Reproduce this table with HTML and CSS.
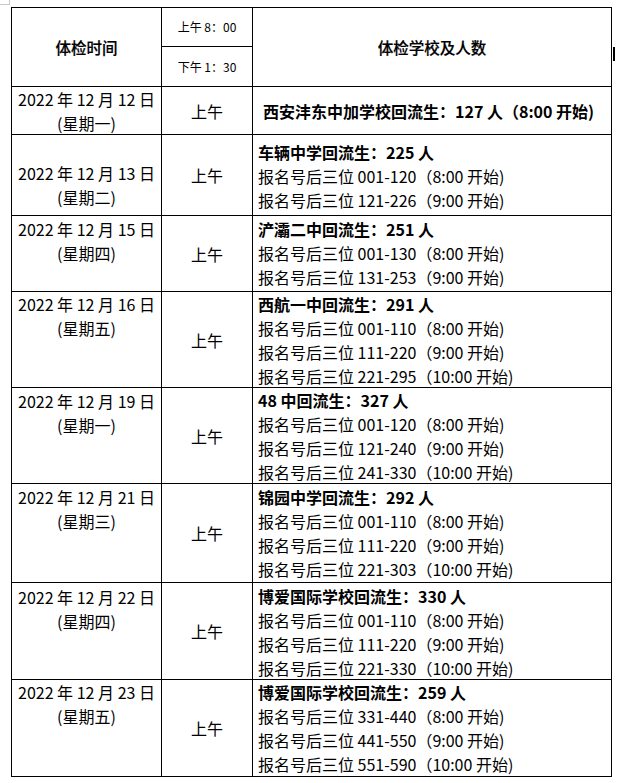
FILE: index.html
```html
<!DOCTYPE html>
<html lang="zh-CN">
<head>
<meta charset="utf-8">
<title>体检安排</title>
<link rel="stylesheet" href="styles.css">
</head>
<body>
<div class="corner"></div>
<div class="sheet">
  <div class="row head">
    <div class="c1 hcell">体检时间</div>
    <div class="c2 split">
      <div class="sub top">上午 8：00</div>
      <div class="sub bot">下午 1：30</div>
    </div>
    <div class="c3 hcell">体检学校及人数</div>
  </div>

  <div class="row r1">
    <div class="c1 date"><div>2022 年 12 月 12 日</div><div>(星期一)</div></div>
    <div class="c2 am">上午</div>
    <div class="c3 school single"><div class="b">西安沣东中加学校回流生：127 人（8:00 开始)</div></div>
  </div>

  <div class="row r2">
    <div class="c1 date"><div>2022 年 12 月 13 日</div><div>(星期二)</div></div>
    <div class="c2 am">上午</div>
    <div class="c3 school">
      <div class="b">车辆中学回流生：225 人</div>
      <div>报名号后三位 001-120（8:00 开始)</div>
      <div>报名号后三位 121-226（9:00 开始)</div>
    </div>
  </div>

  <div class="row r3">
    <div class="c1 date"><div>2022 年 12 月 15 日</div><div>(星期四)</div></div>
    <div class="c2 am">上午</div>
    <div class="c3 school">
      <div class="b">浐灞二中回流生：251 人</div>
      <div>报名号后三位 001-130（8:00 开始)</div>
      <div>报名号后三位 131-253（9:00 开始)</div>
    </div>
  </div>

  <div class="row r4">
    <div class="c1 date"><div>2022 年 12 月 16 日</div><div>(星期五)</div></div>
    <div class="c2 am">上午</div>
    <div class="c3 school">
      <div class="b">西航一中回流生：291 人</div>
      <div>报名号后三位 001-110（8:00 开始)</div>
      <div>报名号后三位 111-220（9:00 开始)</div>
      <div>报名号后三位 221-295（10:00 开始)</div>
    </div>
  </div>

  <div class="row r5">
    <div class="c1 date"><div>2022 年 12 月 19 日</div><div>(星期一)</div></div>
    <div class="c2 am">上午</div>
    <div class="c3 school">
      <div class="b">48 中回流生：327 人</div>
      <div>报名号后三位 001-120（8:00 开始)</div>
      <div>报名号后三位 121-240（9:00 开始)</div>
      <div>报名号后三位 241-330（10:00 开始)</div>
    </div>
  </div>

  <div class="row r6">
    <div class="c1 date"><div>2022 年 12 月 21 日</div><div>(星期三)</div></div>
    <div class="c2 am">上午</div>
    <div class="c3 school">
      <div class="b">锦园中学回流生：292 人</div>
      <div>报名号后三位 001-110（8:00 开始)</div>
      <div>报名号后三位 111-220（9:00 开始)</div>
      <div>报名号后三位 221-303（10:00 开始)</div>
    </div>
  </div>

  <div class="row r7">
    <div class="c1 date"><div>2022 年 12 月 22 日</div><div>(星期四)</div></div>
    <div class="c2 am">上午</div>
    <div class="c3 school">
      <div class="b">博爱国际学校回流生：330 人</div>
      <div>报名号后三位 001-110（8:00 开始)</div>
      <div>报名号后三位 111-220（9:00 开始)</div>
      <div>报名号后三位 221-330（10:00 开始)</div>
    </div>
  </div>

  <div class="row r8">
    <div class="c1 date"><div>2022 年 12 月 23 日</div><div>(星期五)</div></div>
    <div class="c2 am">上午</div>
    <div class="c3 school">
      <div class="b">博爱国际学校回流生：259 人</div>
      <div>报名号后三位 331-440（8:00 开始)</div>
      <div>报名号后三位 441-550（9:00 开始)</div>
      <div>报名号后三位 551-590（10:00 开始)</div>
    </div>
  </div>
  <div class="mark"></div>
</div>
</body>
</html>
```

FILE: styles.css
```css
html, body {
  margin: 0;
  padding: 0;
  background: #fff;
}
body {
  font-family: "Noto Sans CJK SC", "Noto Sans", sans-serif;
  color: #000;
  font-size: 16px;
  line-height: 24px;
}
.corner {
  position: absolute;
  left: 0;
  top: 0;
  width: 9px;
  height: 4px;
  border-right: 1px solid #c8c8c8;
  border-bottom: 1px solid #c8c8c8;
}
.sheet {
  position: relative;
  width: 601px;
  margin: 7px 0 0 11px;
  border-top: 1px solid #000;
  border-left: 1px solid #000;
  box-sizing: border-box;
}
.row {
  display: flex;
}
.row > div {
  box-sizing: border-box;
  border-right: 1px solid #000;
  border-bottom: 1px solid #000;
}
.c1 { width: 150px; }
.c2 { width: 91px; }
.c3 { width: 359px; }

.head { height: 79px; }
.hcell {
  display: flex;
  align-items: center;
  justify-content: center;
  font-size: 15.5px;
  font-weight: 500;
  -webkit-text-stroke: 0.2px #000;
}
.split {
  display: flex;
  flex-direction: column;
}
.sub {
  display: flex;
  align-items: center;
  justify-content: center;
  font-size: 12px;
  box-sizing: border-box;
}
.sub.top { height: 39px; border-bottom: 1px solid #000; }
.sub.bot { flex: 1; }

.date {
  text-align: center;
  padding-top: 1px;
}
.am {
  display: flex;
  align-items: center;
  justify-content: center;
}
.school {
  padding-left: 5px;
  padding-top: 1px;
  white-space: nowrap;
}
.school .b { font-weight: 700; }
.school.single {
  display: flex;
  align-items: center;
  padding-top: 0;
  padding-left: 10px;
}

.r1 { height: 48px; }
.r1 .date { padding-top: 0; }
.r2 { height: 81px; }
.r2 .date { padding-top: 26px; }
.r2 .school { padding-top: 5px; }
.r3 { height: 76px; }
.r4 { height: 96px; }
.r4 .date, .r4 .school { padding-top: 0; }
.r5 { height: 96px; }
.r5 .school { padding-top: 0; }
.r6 { height: 99px; }
.r7 { height: 97px; }
.r7 .date { padding-top: 2px; }
.r8 { height: 97px; }
.r8 .date, .r8 .school { padding-top: 0; }

.mark {
  position: absolute;
  left: 601px;
  top: 39px;
  width: 2px;
  height: 14px;
  background: #000;
}
```
